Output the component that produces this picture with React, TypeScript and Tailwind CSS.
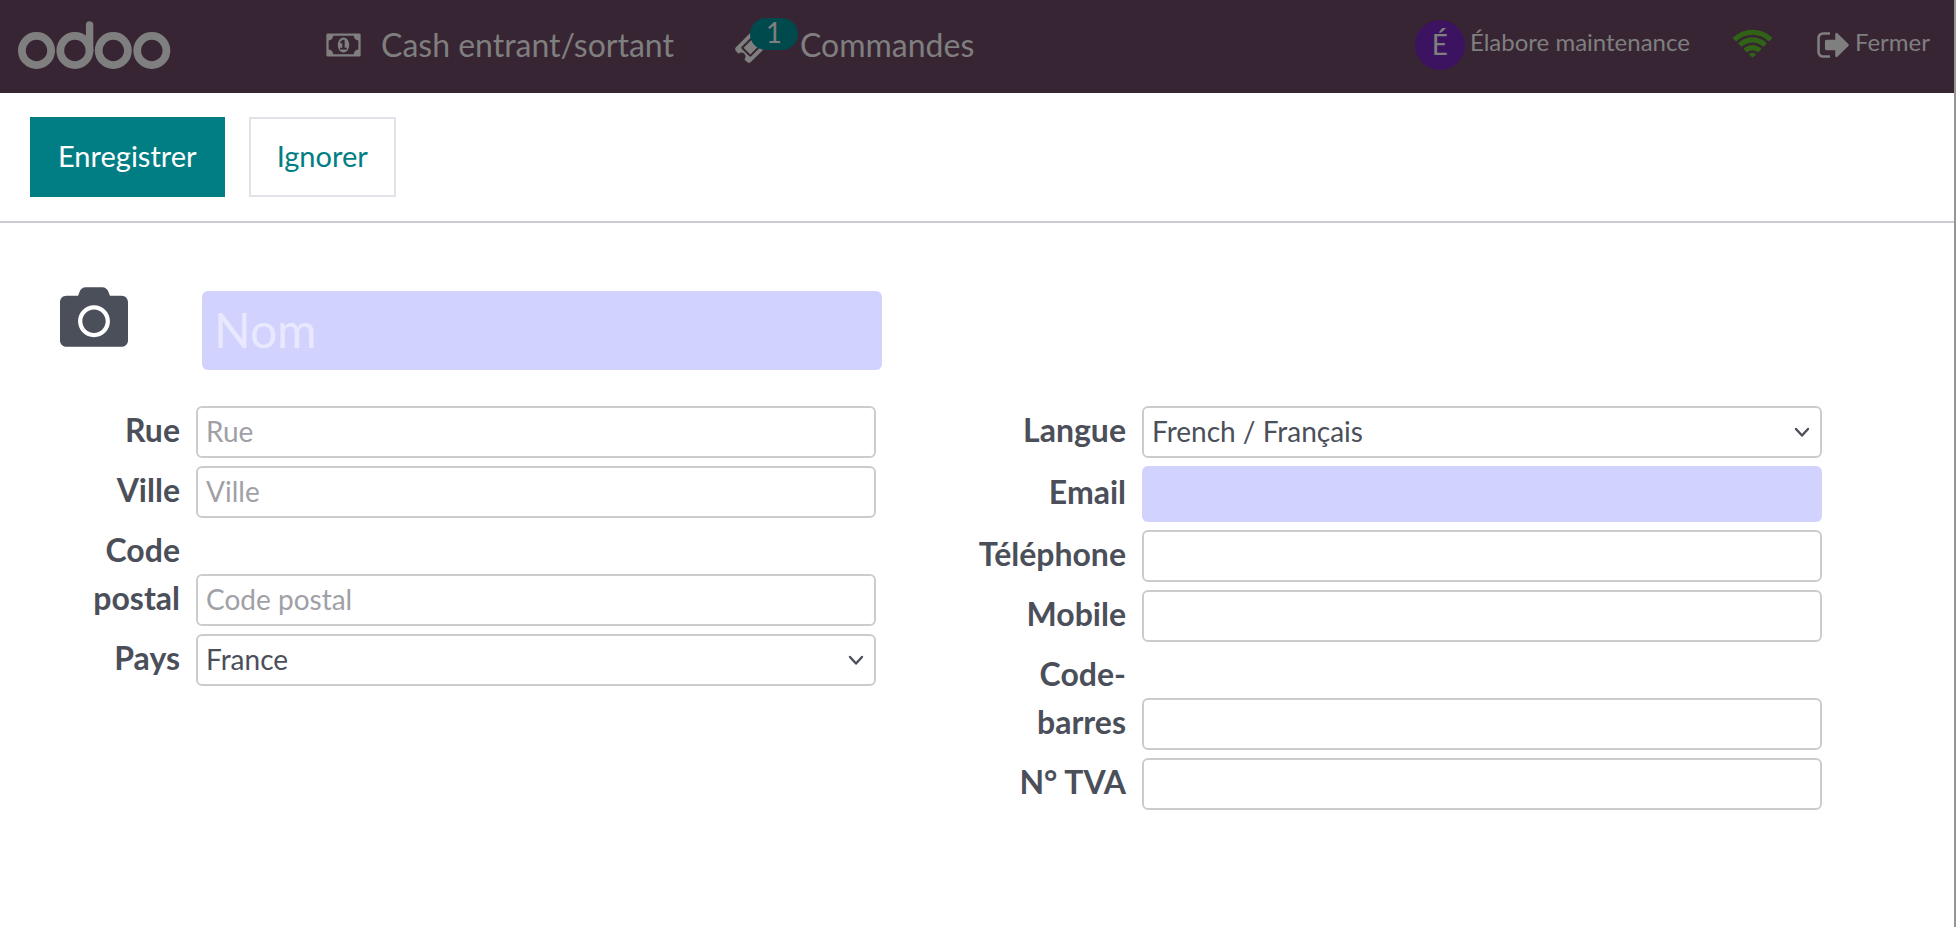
import type { ReactNode } from "react";
import { FaCamera } from "react-icons/fa";

function OdooLogo() {
  return (
    <svg viewBox="0 0 154 50" className="h-[50px] w-[154px]" fill="none" stroke="currentColor" strokeWidth="7.8" role="img" aria-label="odoo">
      <circle cx="19.5" cy="30.5" r="14.6" />
      <circle cx="57.9" cy="30.5" r="14.6" />
      <path d="M72.6 30.5V4.9" strokeLinecap="round" strokeWidth="7.4" />
      <circle cx="96.3" cy="30.5" r="14.6" />
      <circle cx="134.8" cy="30.5" r="14.6" />
    </svg>
  );
}

function MoneyIcon() {
  return (
    <svg viewBox="0 0 1920 1792" className="h-8 w-[35px]" fill="currentColor" aria-hidden="true">
      <path d="M768 1152h384v-96h-128v-448h-114l-148 137 77 80q42-37 55-57h2v288h-128v96zm512-256q0 70-21 142t-59.5 134-101.5 101-138 39-138-39-101.5-101-59.5-134-21-142 21-142 59.5-134 101.5-101 138-39 138 39 101.5 101 59.5 134 21 142zm512 256v-512q-106 0-181-75t-75-181h-1152q0 106-75 181t-181 75v512q106 0 181 75t75 181h1152q0-106 75-181t181-75zm128-832v1152q0 26-19 45t-45 19h-1792q-26 0-45-19t-19-45v-1152q0-26 19-45t45-19h1792q26 0 45 19t19 45z" />
    </svg>
  );
}

function TicketIcon() {
  return (
    <svg viewBox="0 0 1792 1792" className="size-[38px]" fill="currentColor" aria-hidden="true">
      <path d="M1024 452l316 316-572 572-316-316zm-211 979l618-618q19-19 19-45t-19-45l-362-362q-18-18-45-18t-45 18l-618 618q-19 19-19 45t19 45l362 362q18 18 45 18t45-18zm889-637l-907 908q-37 37-90.5 37t-90.5-37l-126-126q56-56 56-136t-56-136-136-56-136 56l-125-126q-37-37-37-90.5t37-90.5l907-906q37-37 90.5-37t90.5 37l125 125q-56 56-56 136t56 136 136 56 136-56l126 125q37 37 37 90.5t-37 90.5z" />
    </svg>
  );
}

function WifiIcon() {
  return (
    <svg viewBox="0 0 2048 1792" className="h-9 w-[41px] text-[#316317]" fill="currentColor" role="img" aria-label="Connecté">
      <path d="M1024 1523q-20 0-93-73.5t-73-93.5q0-32 62.5-54t103.5-22 103.5 22 62.5 54q0 20-73 93.5t-93 73.5zm270-271q-2 0-40-25t-101.5-50-128.5-25-128.5 25-101 50-40.5 25q-18 0-93.5-75t-75.5-93q0-13 10-23 78-77 196-121t233-44 233 44 196 121q10 10 10 23 0 18-75.5 93t-93.5 75zm273-272q-11 0-23-8-136-105-252-154.5t-268-49.5q-85 0-170.5 22t-149 53-113.5 62-79 53-31 22q-17 0-92-75t-75-93q0-12 10-22 132-132 320-205t380-73 380 73 320 205q10 10 10 22 0 18-75 93t-92 75zm271-271q-11 0-22-9-179-157-371.5-236.5t-420.5-79.5-420.5 79.5-371.5 236.5q-11 9-22 9-17 0-92.5-75t-75.5-93q0-13 10-23 187-186 445-288t527-102 527 102 445 288q10 10 10 23 0 18-75.5 93t-92.5 75z" />
    </svg>
  );
}

function SignOutIcon() {
  return (
    <svg viewBox="64 0 1568 1792" className="h-9 w-8" fill="currentColor" aria-hidden="true">
      <path d="M704 1440q0 4 1 20t.5 26.5-3 23.5-10 19.5-20.5 6.5h-320q-119 0-203.5-84.5t-84.5-203.5v-704q0-119 84.5-203.5t203.5-84.5h320q13 0 22.5 9.5t9.5 22.5q0 4 1 20t.5 26.5-3 23.5-10 19.5-20.5 6.5h-320q-66 0-113 47t-47 113v704q0 66 47 113t113 47h312l11.5 1 11.5 3 8 5.5 7 9 2 13.5zm928-544q0 26-19 45l-544 544q-19 19-45 19t-45-19-19-45v-288h-448q-26 0-45-19t-19-45v-384q0-26 19-45t45-19h448v-288q0-26 19-45t45-19 45 19l544 544q19 19 19 45z" />
    </svg>
  );
}

const boxClass =
  "block h-[52px] w-full appearance-none rounded-md border-2 border-[#cccccc] bg-white px-2 pb-0.5 text-[28px] text-[#4b4f5a] placeholder:text-[#a0a0a7]";

function Row({ id, label, children }: { id: string; label: string; children: ReactNode }) {
  return (
    <div className="flex items-baseline-last gap-4">
      <label htmlFor={id} className="w-[149px] shrink-0 text-right text-[32px] leading-[48px] font-bold">
        {label}
      </label>
      <div className="relative flex-1">{children}</div>
    </div>
  );
}

function TextRow({ id, label, placeholder, required }: { id: string; label: string; placeholder?: string; required?: boolean }) {
  return (
    <Row id={id} label={label}>
      <input
        id={id}
        placeholder={placeholder}
        required={required}
        className={required ? "block h-14 w-full rounded-md bg-[#d2d2ff] px-2 pb-0.5 text-[28px]" : boxClass}
      />
    </Row>
  );
}

function SelectRow({ id, label, options }: { id: string; label: string; options: string[] }) {
  return (
    <Row id={id} label={label}>
      <select id={id} className={boxClass}>
        {options.map((o) => (
          <option key={o}>{o}</option>
        ))}
      </select>
      <svg viewBox="0 0 16 12" className="pointer-events-none absolute top-5 right-3 h-3 w-4" fill="none" stroke="currentColor" strokeWidth="2.4" strokeLinecap="round" strokeLinejoin="round" aria-hidden="true">
        <path d="M2 3l6 6.5L14 3" />
      </svg>
    </Row>
  );
}

export default function App() {
  return (
    <div className="min-h-screen border-r-2 border-[#959595] bg-white font-['Lato',sans-serif] text-[#4b4f5a]">
      <header className="flex h-[93px] items-center bg-[#382533] pr-6 pb-[3px] pl-[17px] text-[#7f7f7f]">
        <a href="#" className="mr-[155px]">
          <OdooLogo />
        </a>
        <button className="flex items-center gap-5 text-[32px] leading-[48px]">
          <MoneyIcon />
          Cash entrant/sortant
        </button>
        <button className="ml-[60px] flex items-center text-[32px] leading-[48px]">
          <span className="relative mr-7">
            <TicketIcon />
            <span className="absolute -top-2 left-4 h-8 w-12 rounded-full bg-[#00494c] text-center text-[28px] leading-7">1</span>
          </span>
          Commandes
        </button>
        <div className="ml-auto flex items-center text-2xl">
          <button className="flex items-center gap-[5px]">
            <span className="flex size-[50px] items-center justify-center rounded-full bg-[#3c1361] text-[28px]">É</span>
            <span className="pb-1.5">Élabore maintenance</span>
          </button>
          <span className="ml-[42px]">
            <WifiIcon />
          </span>
          <button className="ml-11 flex items-center gap-1.5">
            <SignOutIcon />
            <span className="pb-1.5">Fermer</span>
          </button>
        </div>
      </header>

      <div className="flex gap-6 border-b-2 border-[#c9ccd2] px-[30px] py-6 text-[29px]">
        <button className="h-20 bg-[#017e84] px-7 pb-0.5 text-white">Enregistrer</button>
        <button className="h-20 border-2 border-[#e2e2e8] px-[26px] pb-0.5 text-[#017e84]">Ignorer</button>
      </div>

      <form className="px-[31px] pt-[60px]">
        <div className="mb-9 grid grid-cols-2">
          <div className="flex items-start pr-[95px] pl-[29px]">
            <button type="button" aria-label="Ajouter une photo" className="mr-[74px]">
              <FaCamera className="size-[68px] text-[#4b4f5a]" />
            </button>
            <input aria-label="Nom" placeholder="Nom" required className="mt-2 h-[79px] min-w-0 flex-1 rounded-md bg-[#d2d2ff] px-3 pb-0.5 text-5xl placeholder:text-[#e8e8ff]" />
          </div>
        </div>
        <div className="grid grid-cols-2">
          <div className="flex flex-col gap-2 pr-[101px]">
            <TextRow id="rue" label="Rue" placeholder="Rue" />
            <TextRow id="ville" label="Ville" placeholder="Ville" />
            <TextRow id="code-postal" label="Code postal" placeholder="Code postal" />
            <SelectRow id="pays" label="Pays" options={["France"]} />
          </div>
          <div className="flex flex-col gap-2 pr-[101px]">
            <SelectRow id="langue" label="Langue" options={["French / Français"]} />
            <TextRow id="email" label="Email" required />
            <TextRow id="telephone" label="Téléphone" />
            <TextRow id="mobile" label="Mobile" />
            <TextRow id="code-barres" label="Code-barres" />
            <TextRow id="tva" label="N° TVA" />
          </div>
        </div>
      </form>
    </div>
  );
}
